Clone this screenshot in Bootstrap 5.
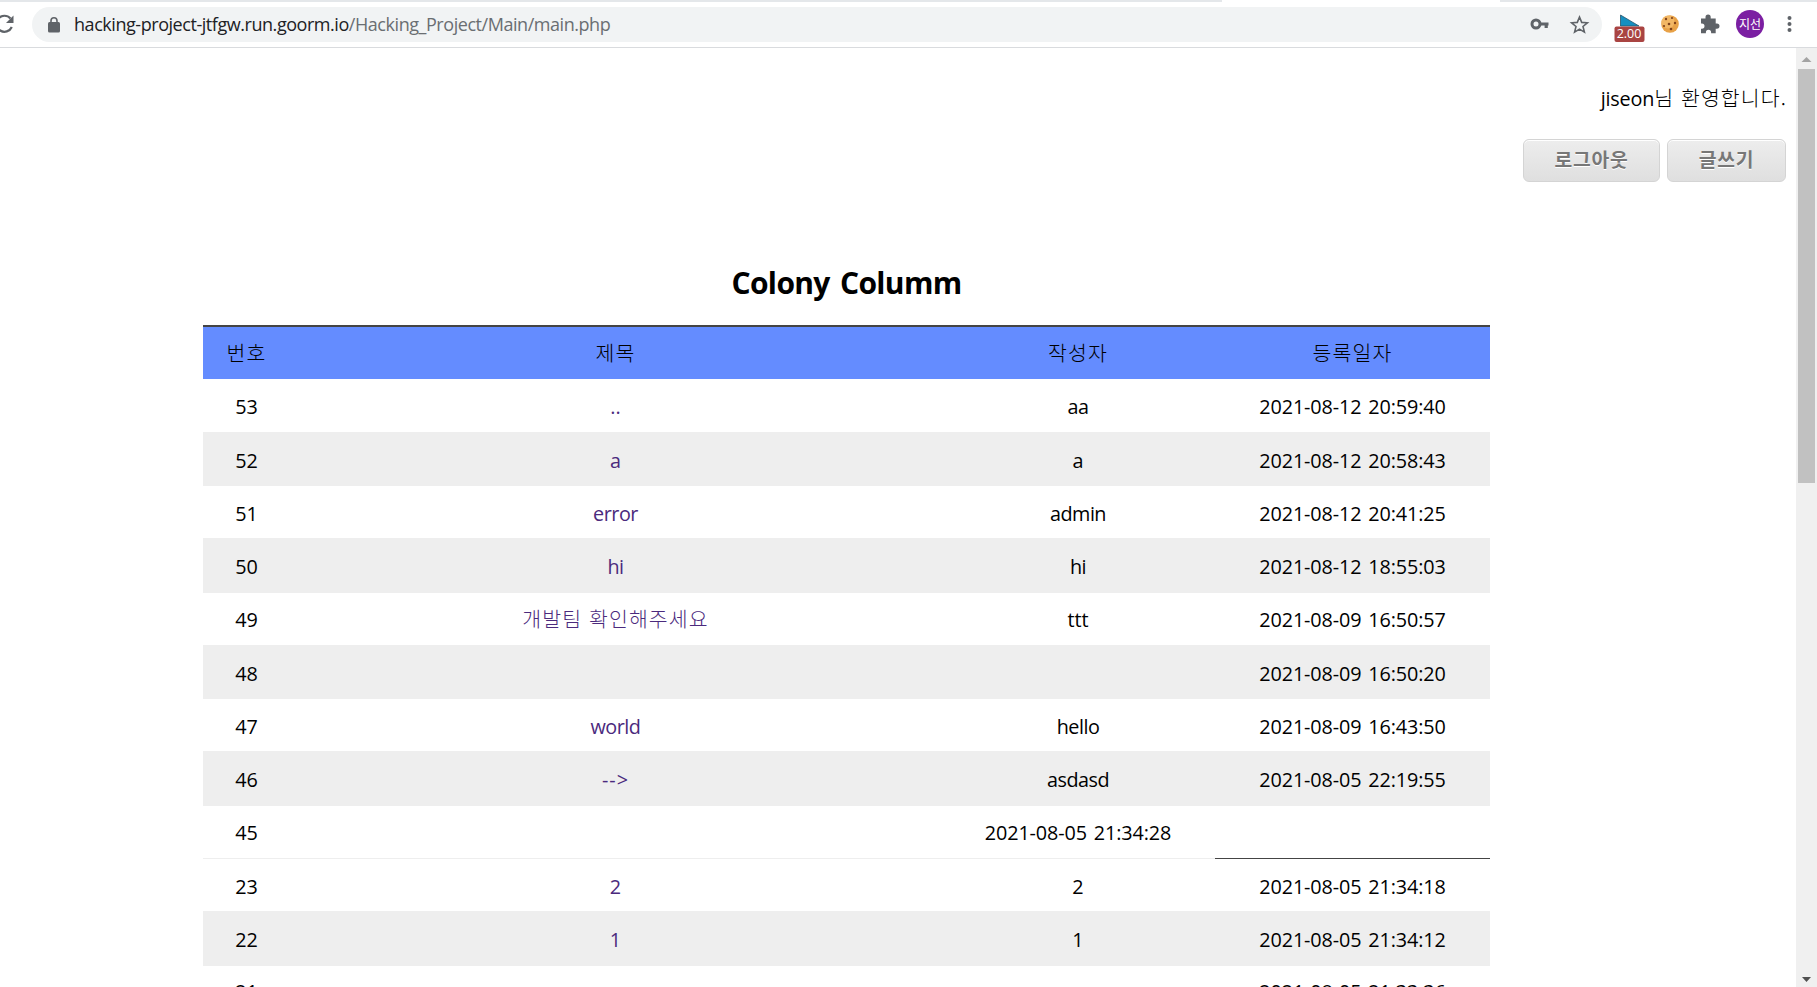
<!DOCTYPE html>
<html lang="ko">
<head>
<meta charset="utf-8">
<title>Colony Columm</title>
<link href="https://cdn.jsdelivr.net/npm/bootstrap@5.3.0/dist/css/bootstrap.min.css" rel="stylesheet">
<style>
body{height:100vh;overflow:hidden;background:#fff;color:#000;font:19.8px/27px "Open Sans","Noto Sans CJK KR",sans-serif}
.tabstrip{height:2px;background:#e4e7ea}
.tabstrip span{display:block;width:278px;height:2px;margin-left:1222px;background:#fff}
.toolbar{height:46px;border-bottom:1px solid #d9dbde}
.reload{width:32px;height:35px;flex:none}
.omnibox{width:1570px;height:35px;background:#f1f3f4;flex:none}
.url{font-size:18px;letter-spacing:-.45px;color:#6a6e72;margin-left:14px;line-height:35px;white-space:nowrap}
.url b{font-weight:400;color:#202124}
.tools{width:215px;height:35px;flex:none}
.ko{font-family:"Noto Sans CJK KR",sans-serif;font-weight:300;font-size:20.5px;letter-spacing:1.1px;line-height:24px}
.words{letter-spacing:-.5px}
.page{height:939px}
.sbar{width:21px;background:#f0f0f0;padding:0 2px}
.sbar i{display:block;background:#c1c1c1;height:414px}
.topright{height:209px;padding:37px 9px 0 0}
.hello{height:27px;margin-bottom:27px}
.hello .words{letter-spacing:-.2px}
.gbtn{height:43px;border:1px solid #d4d4d4;border-radius:6px;background:linear-gradient(#ededed,#dfdfdf);box-shadow:inset 0 1px 0 #fff;color:#777;font:700 19.3px/36px "Noto Sans CJK KR",sans-serif;text-shadow:0 1px 0 #fff;padding:0 0 3px;text-align:center;letter-spacing:.7px}
h2{font-weight:700;font-size:30px;line-height:40px;height:68px;margin:0;padding-top:6px;letter-spacing:-.65px;word-spacing:3px}
.board{width:1287px;margin-left:203px}
.posts{width:1287px;table-layout:fixed;border-collapse:separate;border-spacing:0;text-align:center}
.posts th{height:54px;padding:0 0 2px;background:#648cff;border-top:2px solid #444;font-weight:300;line-height:28px}
.posts td{height:53px;padding:14px 0 0;border-bottom:1px solid #eee;line-height:27px;vertical-align:top}
.posts td:last-child,.posts .stamp{letter-spacing:-.12px;word-spacing:2px}
.posts .tall td{height:54px}
.posts .high td{padding-top:13px}
.posts .higher td{padding-top:12px}
.posts .shade td{background:#eee}
.posts td.cut{border-bottom-color:#444}
.posts a{color:#4b2a7d;text-decoration:none}
.posts .arrow{letter-spacing:1px}
</style>
<script src="https://cdn.jsdelivr.net/npm/bootstrap@5.3.0/dist/js/bootstrap.bundle.min.js"></script>
</head>
<body>
<div class="tabstrip"><span></span></div>
<header class="toolbar d-flex align-items-center">
<svg class="reload" viewBox="0 0 32 35"><path d="M10.5 11.5A8 8 0 1 0 11.8 20" fill="none" stroke="#5f6368" stroke-width="2.2"/><path d="M13.5 8.500v7.500H6z" fill="#5f6368"/></svg>
<div class="omnibox rounded-pill d-flex align-items-center">
<svg width="12" height="16" viewBox="0 0 12 16" style="margin-left:16px"><rect y="5" width="12" height="10.500" rx="1.500" fill="#5f6368"/><path d="M3 6V3.800a3 3 0 0 1 6 0V6" fill="none" stroke="#5f6368" stroke-width="1.600"/></svg>
<span class="url"><b>hacking-project-jtfgw.run.goorm.io</b>/Hacking_Project/Main/main.php</span>
<svg class="ms-auto me-2" width="66" height="35" viewBox="0 0 66 35"><g fill="none" stroke="#5f6368"><circle cx="8" cy="17" r="4" stroke-width="3"/><path d="M12 17h8.500M18.200 17v4" stroke-width="3.200"/><path d="M50 10.200l2.200 5.400 5.700.4-4.400 3.700 1.400 5.600-4.900-3-4.900 3 1.400-5.600-4.400-3.700 5.700-.4z" transform="translate(1.500 -.2)" stroke-width="1.600"/></g></svg>
</div>
<svg class="tools" viewBox="0 0 215 35">
<path d="M18.500 8v11H37z" fill="#168fc0" stroke="#27536a" stroke-width=".8"/>
<rect x="12.500" y="19.500" width="30" height="15.500" rx="2" fill="#a94442"/><text x="27" y="31.400" font-size="12.500" fill="#fff" text-anchor="middle" font-family="Open Sans">2.00</text>
<circle cx="68" cy="17" r="8.800" fill="#e8a248"/><circle cx="66" cy="15" r="6.500" fill="#f2b765"/><g fill="#80421a"><circle cx="64" cy="12" r="1.200"/><circle cx="70" cy="11" r="1.100"/><circle cx="67" cy="17" r="1.300"/><circle cx="73" cy="16" r="1.200"/><circle cx="62" cy="19" r="1.100"/><circle cx="69" cy="22" r="1.300"/></g>
<path d="M99 11.500h4.500v-1.300a2.600 2.600 0 0 1 5.200 0v1.300h5v5h1.200a2.600 2.600 0 0 1 0 5.200h-1.200v4.600h-4.600v-1a2.600 2.600 0 0 0-5.200 0v1H99v-4.600h.9a2.600 2.600 0 0 0 0-5.200H99z" fill="#5f6368"/>
<circle cx="148" cy="17" r="14" fill="#7b1fa2"/><text x="148" y="21.500" font-size="12" fill="#fff" text-anchor="middle" font-family="Noto Sans CJK KR">지선</text>
<g fill="#5f6368"><circle cx="187.500" cy="11" r="2"/><circle cx="187.500" cy="17" r="2"/><circle cx="187.500" cy="23" r="2"/></g>
</svg>
</header>
<div class="page d-flex">
<main class="flex-grow-1 overflow-hidden">
<div class="topright">
<div class="hello text-end"><span class="words">jiseon</span><span class="ko">님 환영합니다.</span></div>
<div class="d-flex justify-content-end pe-0" style="margin-right:1px"><button class="gbtn" style="width:137px;margin-right:7px">로그아웃</button><button class="gbtn" style="width:119px">글쓰기</button></div>
</div>
<section class="board">
<h2 class="text-center">Colony Columm</h2>
<table class="posts">
<colgroup><col style="width:87px"><col style="width:651px"><col style="width:274px"><col style="width:275px"></colgroup>
<thead><tr class="ko"><th>번호</th><th>제목</th><th>작성자</th><th>등록일자</th></tr></thead>
<tbody>
<tr class="tall"><td>53</td><td><a href="#">..</a></td><td class="words">aa</td><td>2021-08-12 20:59:40</td></tr>
<tr class="shade"><td>52</td><td><a href="#">a</a></td><td>a</td><td>2021-08-12 20:58:43</td></tr>
<tr><td>51</td><td class="words"><a href="#">error</a></td><td class="words">admin</td><td>2021-08-12 20:41:25</td></tr>
<tr class="tall shade"><td>50</td><td class="words"><a href="#">hi</a></td><td class="words">hi</td><td>2021-08-12 18:55:03</td></tr>
<tr class="high"><td>49</td><td><a href="#" class="ko">개발팀 확인해주세요</a></td><td>ttt</td><td>2021-08-09 16:50:57</td></tr>
<tr class="shade"><td>48</td><td></td><td></td><td>2021-08-09 16:50:20</td></tr>
<tr><td>47</td><td class="words"><a href="#">world</a></td><td class="words">hello</td><td>2021-08-09 16:43:50</td></tr>
<tr class="tall shade"><td>46</td><td class="arrow"><a href="#">--&gt;</a></td><td class="words">asdasd</td><td>2021-08-05 22:19:55</td></tr>
<tr class="high"><td>45</td><td></td><td class="stamp">2021-08-05 21:34:28</td><td class="cut"></td></tr>
<tr><td>23</td><td><a href="#">2</a></td><td>2</td><td>2021-08-05 21:34:18</td></tr>
<tr class="tall shade"><td>22</td><td><a href="#">1</a></td><td>1</td><td>2021-08-05 21:34:12</td></tr>
<tr class="higher"><td>21</td><td></td><td></td><td>2021-08-05 21:33:36</td></tr>
</tbody>
</table>
</section>
</main>
<aside class="sbar flex-shrink-0 d-flex flex-column justify-content-between">
<div><svg class="d-block" width="17" height="21"><path d="M3.500 14h10L8.500 9z" fill="#a3a3a3"/></svg><i></i></div>
<svg class="d-block" width="17" height="21"><path d="M4 11h9l-4.500 5z" fill="#505050"/></svg>
</aside>
</div>
</body>
</html>
